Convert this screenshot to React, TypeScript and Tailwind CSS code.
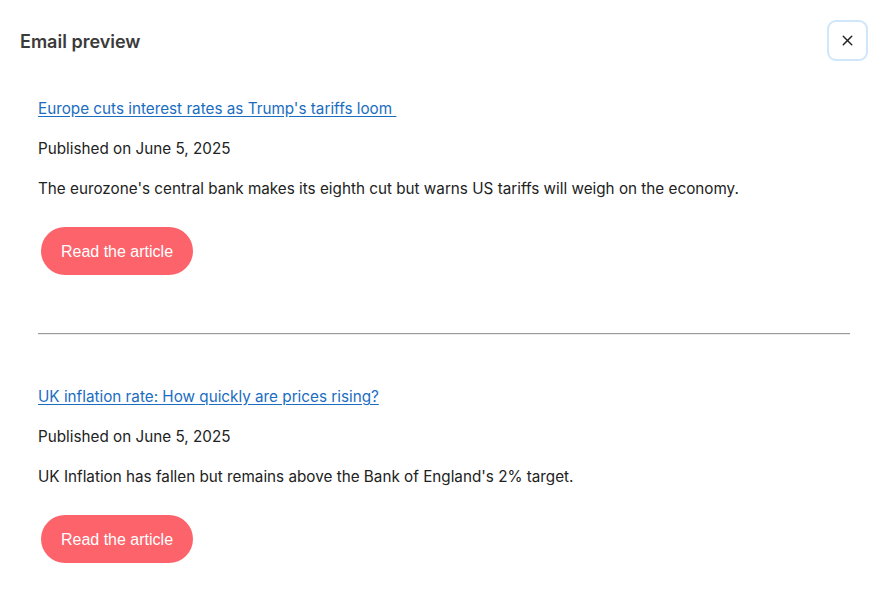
import { X } from "lucide-react";

const articles = [
  {
    title: "Europe cuts interest rates as Trump's tariffs loom\u00a0",
    date: "Published on June 5, 2025",
    summary:
      "The eurozone's central bank makes its eighth cut but warns US tariffs will weigh on the economy.",
  },
  {
    title: "UK inflation rate: How quickly are prices rising?",
    date: "Published on June 5, 2025",
    summary: "UK Inflation has fallen but remains above the Bank of England's 2% target.",
  },
];

function Article({ item }: { item: (typeof articles)[number] }) {
  return (
    <div className="flex flex-col items-start">
      <a href="#" className="text-[15.25px] leading-[22px] text-[#1a6dbf] underline underline-offset-2">
        {item.title}
      </a>
      <p className="mt-[18px] text-[15.25px] leading-[22px] text-[#222]">{item.date}</p>
      <p className="mt-[18px] text-[15.25px] leading-[22px] text-[#222]">{item.summary}</p>
      <button className="mt-[27px] ml-[3px] h-[48px] w-[152px] rounded-full bg-[#fc636b] pt-[1px] text-[16px] text-white font-['Liberation_Sans',Arial,sans-serif]">
        Read the article
      </button>
    </div>
  );
}

export default function App() {
  return (
    <div className="w-[884px] h-[605px] bg-white font-['Inter',sans-serif] overflow-hidden">
      <div className="flex items-start justify-between pl-[20px] pr-[16px] pt-[20px]">
        <h1 className="mt-[11px] text-[18px] leading-[22px] font-semibold text-[#3a3a3a]">Email preview</h1>
        <button className="flex h-[41px] w-[41px] items-center justify-center rounded-[9px] border-2 border-[#cfe6fb] text-[#222]">
          <X size={17} strokeWidth={2} />
        </button>
      </div>
      <div className="px-[38px] pr-[34px] pt-[37px]">
        <Article item={articles[0]} />
        <div className="mt-[58px] border-t border-b border-t-[#9a9a9a] border-b-[#ececec]" />
        <div className="mt-[51px]">
          <Article item={articles[1]} />
        </div>
      </div>
    </div>
  );
}
